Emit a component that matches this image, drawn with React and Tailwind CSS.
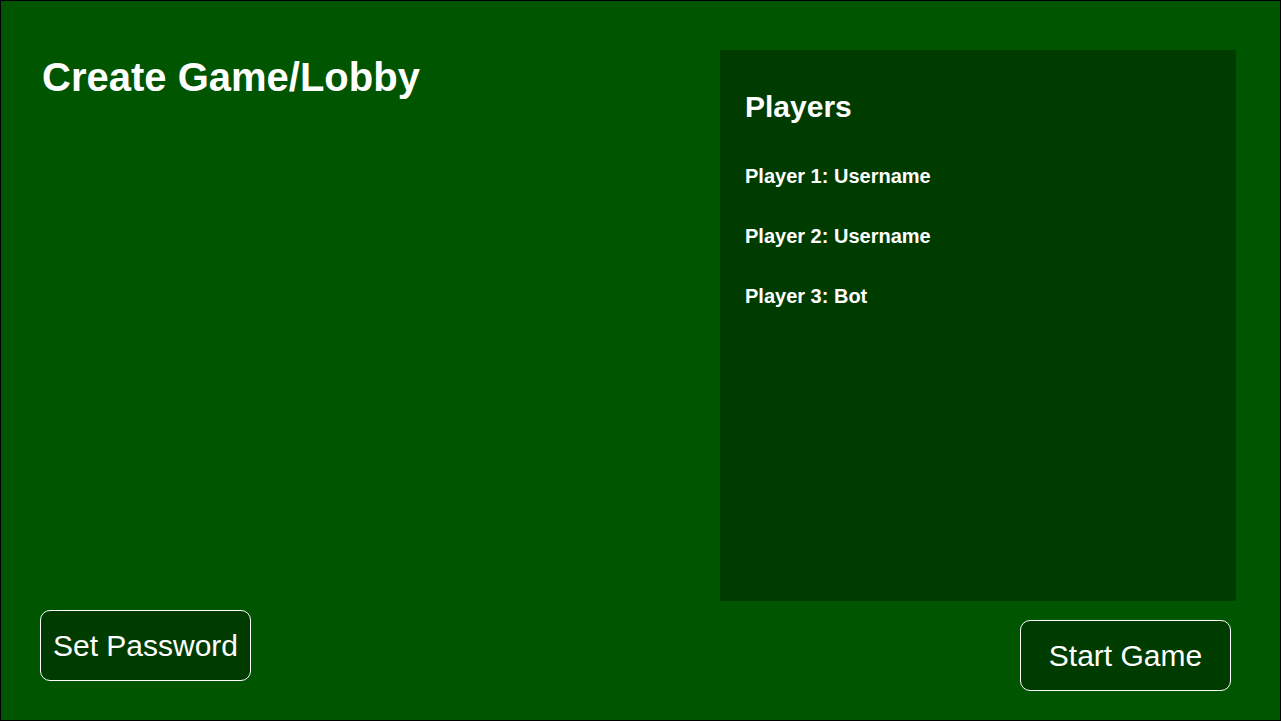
export default function App() {
  const players = ["Player 1: Username", "Player 2: Username", "Player 3: Bot"];
  return (
    <div
      className="w-[1281px] h-[721px] border border-black bg-[#005500] flex text-white overflow-hidden"
      style={{ fontFamily: '"Liberation Sans", Arial, sans-serif' }}
    >
      <div className="flex-1 flex flex-col justify-between pl-[39px] pt-[53px] pb-[39px] items-start">
        <h1 className="ml-[2px] text-[40px] leading-[46px] font-bold">Create Game/Lobby</h1>
        <button className="w-[211px] h-[71px] rounded-[10px] border border-white bg-[#003c00] text-[30px] leading-[34px] flex items-center justify-center">
          Set Password
        </button>
      </div>
      <div className="flex flex-col items-end pt-[49px] pr-[44px]">
        <div className="w-[516px] h-[551px] bg-[#003c00] pl-[25px] pt-[40px] flex flex-col">
          <h2 className="text-[30px] leading-[34px] font-bold">Players</h2>
          <div className="mt-[41px] flex flex-col gap-[37px]">
            {players.map((p) => (
              <div key={p} className="text-[20px] leading-[23px] font-bold">
                {p}
              </div>
            ))}
          </div>
        </div>
        <button className="mt-[19px] mr-[5px] w-[211px] h-[71px] rounded-[10px] border border-white bg-[#003c00] text-[30px] leading-[34px] flex items-center justify-center">
          Start Game
        </button>
      </div>
    </div>
  );
}
